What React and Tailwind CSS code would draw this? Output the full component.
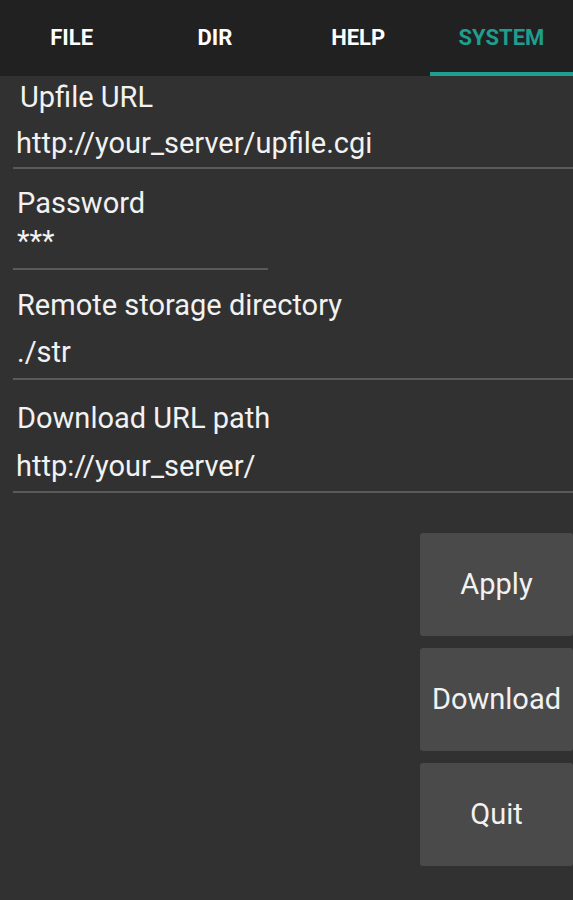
import React from "react";

const tabs = ["FILE", "DIR", "HELP", "SYSTEM"];

const Line = ({ className = "" }) => (
  <div className={`h-[2px] bg-[#5a5a5a] ml-[13px] ${className}`} />
);

const Text = ({ children, className = "" }) => (
  <div className={`h-[30px] leading-[30px] text-[29px] text-[#f2f2f2] whitespace-nowrap ${className}`}>
    {children}
  </div>
);

const Btn = ({ children, className = "" }) => (
  <button className={`w-[153px] h-[103px] bg-[#4a4a4a] rounded-[3px] text-[29px] text-[#f2f2f2] ${className}`}>
    {children}
  </button>
);

export default function App() {
  return (
    <div
      className="w-[573px] h-[900px] bg-[#313131] overflow-hidden"
      style={{ fontFamily: "Roboto, 'Liberation Sans', sans-serif" }}
    >
      <div className="h-[76px] bg-[#212121] flex">
        {tabs.map((t, i) => (
          <div key={t} className="flex-1 flex flex-col">
            <div
              className={`flex-1 flex items-center justify-center text-[22px] font-bold pt-[2px] ${
                i === 3 ? "text-[#1e9e8e]" : "text-white"
              }`}
            >
              {t}
            </div>
            <div className={`h-[4px] ${i === 3 ? "bg-[#1e9e8e]" : ""}`} />
          </div>
        ))}
      </div>

      <Text className="mt-[6px] pl-[20px]">Upfile URL</Text>
      <Text className="mt-[16px] pl-[16px]">http://your_server/upfile.cgi</Text>
      <Line className="mt-[9px]" />

      <Text className="mt-[19px] pl-[17px]">Password</Text>
      <Text className="mt-[8px] pl-[17px]">***</Text>
      <Line className="mt-[12px] w-[255px]" />

      <Text className="mt-[20px] pl-[17px]">Remote storage directory</Text>
      <Text className="mt-[17px] pl-[17px]">./str</Text>
      <Line className="mt-[11px]" />

      <Text className="mt-[23px] pl-[17px]">Download URL path</Text>
      <Text className="mt-[18px] pl-[16px]">http://your_server/</Text>
      <Line className="mt-[10px]" />

      <div className="mt-[40px] flex flex-col items-end gap-[12px]">
        <Btn>Apply</Btn>
        <Btn>Download</Btn>
        <Btn>Quit</Btn>
      </div>
    </div>
  );
}
